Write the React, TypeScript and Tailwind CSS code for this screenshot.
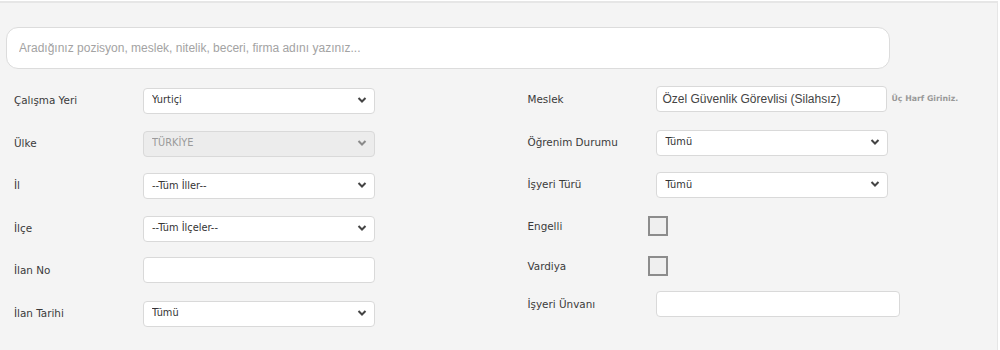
import React from "react";

const labelFont = { fontFamily: '"DejaVu Sans", Verdana, sans-serif' };
const arial = { fontFamily: '"Liberation Sans", Arial, sans-serif' };

function Chevron({ muted }: { muted?: boolean }) {
  return (
    <svg
      width="10"
      height="7"
      viewBox="0 0 10 7"
      className="pointer-events-none absolute right-[8px] top-1/2 -translate-y-1/2"
    >
      <path
        d="M1.5 1.5 L5 5 L8.5 1.5"
        fill="none"
        stroke={muted ? "#8a8a8a" : "#444"}
        strokeWidth="2"
      />
    </svg>
  );
}

function Select({
  value,
  width,
  disabled,
}: {
  value: string;
  width: string;
  disabled?: boolean;
}) {
  return (
    <div className={`relative ${width}`}>
      <select
        disabled={disabled}
        defaultValue={value}
        style={labelFont}
        className={`h-[26px] w-full appearance-none rounded-[4px] border border-[#d9d9d9] pl-[8px] text-[9.8px] outline-none ${
          disabled ? "bg-[#ececec] text-[#9a9a9a]" : "bg-white text-[#333]"
        }`}
      >
        <option>{value}</option>
      </select>
      <Chevron muted={disabled} />
    </div>
  );
}

function TextInput({ width, value }: { width: string; value?: string }) {
  return (
    <input
      defaultValue={value}
      className={`h-[26px] ${width} rounded-[4px] border border-[#d9d9d9] bg-white px-[5px] text-[12px] text-[#444] outline-none`}
      style={arial}
    />
  );
}

function Check() {
  return (
    <div className="ml-[-8px] h-[20px] w-[20px] border-2 border-[#8c8c8c] bg-[#efefef]" />
  );
}

function Row({
  label,
  h,
  children,
}: {
  label: string;
  h: string;
  children: React.ReactNode;
}) {
  return (
    <div className={`flex items-center ${h}`}>
      <div
        className="w-[129px] shrink-0 translate-y-[1px] text-[10.4px] text-[#3a3a3a]"
        style={labelFont}
      >
        {label}
      </div>
      {children}
    </div>
  );
}

export default function App() {
  return (
    <div className="h-[350px] w-[1000px] bg-white pt-[1px]">
      <div className="h-[349px] w-[998px] border-t-2 border-r border-[#e6e6e6] bg-[#f4f4f4]">
        <div className="pl-[6px] pt-[24px]">
          <input
            placeholder="Aradığınız pozisyon, meslek, nitelik, beceri, firma adını yazınız..."
            className="h-[42px] w-[884px] rounded-[12px] border border-[#dcdcdc] bg-white px-[12px] text-[12px] text-[#444] outline-none placeholder:text-[#a3a3a3]"
            style={arial}
          />
        </div>
        <div className="flex pl-[14px] pt-[9px]">
          <div className="w-[514px]">
            <Row label="Çalışma Yeri" h="h-[43px]">
              <Select value="Yurtiçi" width="w-[232px]" />
            </Row>
            <Row label="Ülke" h="h-[43px]">
              <Select value="TÜRKİYE" width="w-[232px]" disabled />
            </Row>
            <Row label="İl" h="h-[42px]">
              <Select value="--Tüm İller--" width="w-[232px]" />
            </Row>
            <Row label="İlçe" h="h-[43px]">
              <Select value="--Tüm İlçeler--" width="w-[232px]" />
            </Row>
            <Row label="İlan No" h="h-[42px]">
              <TextInput width="w-[232px]" />
            </Row>
            <Row label="İlan Tarihi" h="h-[43px]">
              <Select value="Tümü" width="w-[232px]" />
            </Row>
          </div>
          <div className="w-[470px]">
            <Row label="Meslek" h="h-[42px]">
              <TextInput
                width="w-[231px]"
                value="Özel Güvenlik Görevlisi (Silahsız)"
              />
              <span
                className="ml-[4px] text-[7.8px] font-bold text-[#999]"
                style={labelFont}
              >
                Üç Harf Giriniz.
              </span>
            </Row>
            <Row label="Öğrenim Durumu" h="h-[43px]">
              <Select value="Tümü" width="w-[232px]" />
            </Row>
            <Row label="İşyeri Türü" h="h-[42px]">
              <Select value="Tümü" width="w-[232px]" />
            </Row>
            <Row label="Engelli" h="h-[42px]">
              <Check />
            </Row>
            <Row label="Vardiya" h="h-[37px]">
              <Check />
            </Row>
            <Row label="İşyeri Ünvanı" h="h-[40px]">
              <TextInput width="w-[244px]" />
            </Row>
          </div>
        </div>
      </div>
    </div>
  );
}
